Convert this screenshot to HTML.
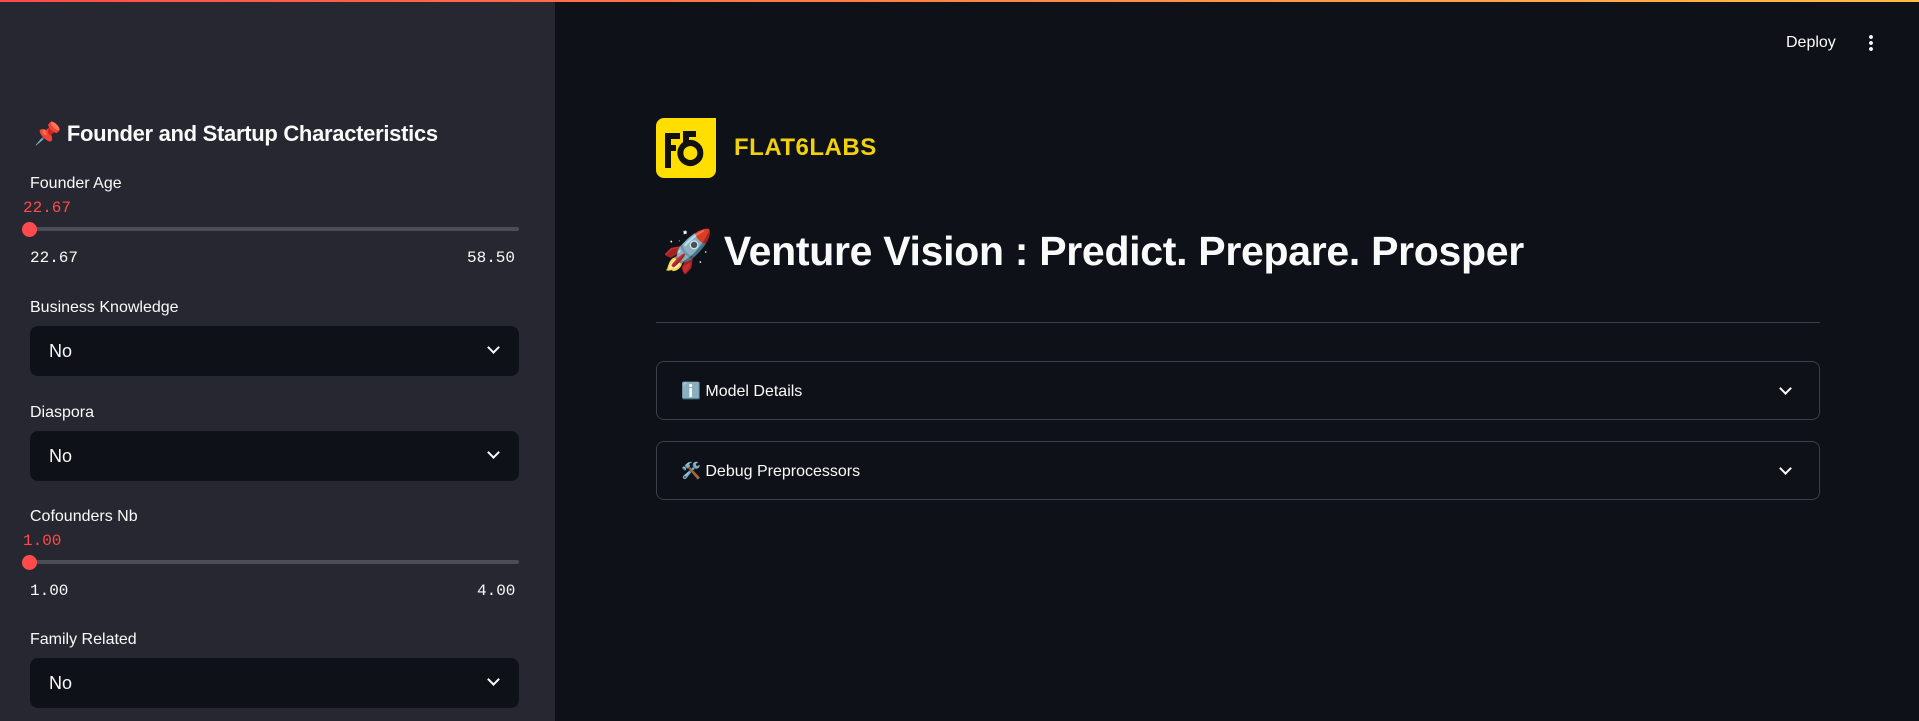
<!DOCTYPE html>
<html><head><meta charset="utf-8"><style>
*{box-sizing:border-box;margin:0;padding:0}
body{width:1919px;height:721px;overflow:hidden;background:#0e1117;font-family:"Liberation Sans",sans-serif;color:#fafafa;position:relative}
.top{position:absolute;left:0;top:0;width:1919px;height:2px;background:linear-gradient(90deg,#ff4b4b,#ffbd45)}
.side{position:absolute;left:0;top:2px;width:555px;height:719px;background:#262730}
.abs{position:absolute;white-space:nowrap}
.lbl{font-size:16px;color:#fafafa}
.mono{font-family:"Liberation Mono",monospace;font-size:16px}
.track{position:absolute;left:30px;width:489px;height:4px;border-radius:2px;background:#4a4c57}
.thumb{position:absolute;width:15px;height:15px;border-radius:50%;background:#ff4b4b}
.sel{position:absolute;left:30px;width:489px;height:50px;border-radius:8px;background:#0e1117;font-size:18px;padding:15px 0 0 19px}
.chev{position:absolute;right:21px;top:17px;width:9px;height:9px;border-right:2.5px solid #fafafa;border-bottom:2.5px solid #fafafa;transform:rotate(45deg)}
.exp{position:absolute;left:656px;width:1164px;height:59px;border:1px solid #3d3f48;border-radius:8px;font-size:16px;padding:19px 0 0 24px}
.exp .chev{top:22px;right:29px;width:9px;height:9px;border-width:2px}
</style></head><body>
<div class="top"></div>
<div class="side">
<div class="abs" style="left:34px;top:119px;font-size:22px;font-weight:bold;letter-spacing:-0.3px">📌 Founder and Startup Characteristics</div>
<div class="abs lbl" style="left:30px;top:173px">Founder Age</div>
<div class="abs mono" style="left:23px;top:197px;color:#ff4b4b">22.67</div>
<div class="track" style="top:225px"></div><div class="thumb" style="left:22px;top:220px"></div>
<div class="abs mono" style="left:30px;top:247px">22.67</div>
<div class="abs mono" style="left:467px;top:247px">58.50</div>
<div class="abs lbl" style="left:30px;top:297px">Business Knowledge</div>
<div class="sel" style="top:324px">No<div class="chev"></div></div>
<div class="abs lbl" style="left:30px;top:402px">Diaspora</div>
<div class="sel" style="top:429px">No<div class="chev"></div></div>
<div class="abs lbl" style="left:30px;top:506px">Cofounders Nb</div>
<div class="abs mono" style="left:23px;top:530px;color:#ff4b4b">1.00</div>
<div class="track" style="top:558px"></div><div class="thumb" style="left:22px;top:553px"></div>
<div class="abs mono" style="left:30px;top:580px">1.00</div>
<div class="abs mono" style="left:477px;top:580px">4.00</div>
<div class="abs lbl" style="left:30px;top:629px">Family Related</div>
<div class="sel" style="top:656px">No<div class="chev"></div></div>
</div>
<div class="abs" style="left:1786px;top:34px;font-size:16px">Deploy</div>
<div class="abs" style="left:1869px;top:34px;width:4px;height:18px;background:radial-gradient(circle,#fafafa 1.8px,transparent 2px) 0 0/4px 6px"></div>
<div class="abs" style="left:656px;top:118px;width:60px;height:60px;background:#ffde00;border-radius:8px 0 8px 8px">
<svg width="60" height="60" viewBox="0 0 60 60"><g fill="none" stroke="#111" stroke-width="6"><path d="M12 50V18H24M12 30H20"/><path d="M40 16H30V28M30 26A10 10 0 1 1 30 44A10 10 0 0 1 30 26"/></g></svg></div>
<div class="abs" style="left:734px;top:134px;font-size:24px;font-weight:900;color:#f2d00a;letter-spacing:0.5px">FLAT6LABS</div>
<div class="abs" style="left:662px;top:228px;font-size:41px;font-weight:bold;letter-spacing:-0.3px">🚀 Venture Vision : Predict. Prepare. Prosper</div>
<div class="abs" style="left:656px;top:322px;width:1164px;height:1px;background:#3d3f48"></div>
<div class="exp" style="top:361px">ℹ️ Model Details<div class="chev"></div></div>
<div class="exp" style="top:441px">🛠️ Debug Preprocessors<div class="chev"></div></div>
</body></html>
